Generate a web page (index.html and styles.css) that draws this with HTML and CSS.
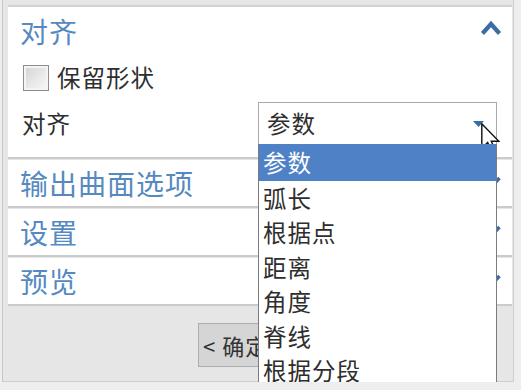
FILE: index.html
```html
<!DOCTYPE html>
<html lang="zh">
<head>
<meta charset="utf-8">
<link rel="stylesheet" href="styles.css">
</head>
<body>
<div class="frame">
  <div class="top-edge"></div>
  <section class="group open">
    <div class="group-head">
      <span class="title">对齐</span>
      <svg class="chev" width="22" height="16" viewBox="0 0 22 16"><path d="M2.5 13.5 L11 4 L19.5 13.5" fill="none" stroke="#3a6da6" stroke-width="4.2" stroke-linejoin="miter"/></svg>
    </div>
    <div class="check-row">
      <span class="checkbox"></span>
      <span class="label">保留形状</span>
    </div>
    <div class="field-row">
      <span class="label">对齐</span>
      <div class="combo">
        <span class="value">参数</span>
        <svg class="combo-arrow" width="11" height="6" viewBox="0 0 11 6"><path d="M0 0 H11 L5.5 6 Z" fill="#3a6da6"/></svg>
        <ul class="dropdown">
          <li class="selected">参数</li>
          <li>弧长</li>
          <li>根据点</li>
          <li>距离</li>
          <li>角度</li>
          <li>脊线</li>
          <li>根据分段</li>
        </ul>
        <svg class="cursor" width="19" height="30" viewBox="0 0 12 19"><path d="M0.5 0.5 L0.5 16 L4.2 12.4 L6.8 18.3 L9 17.3 L6.5 11.6 L11.3 11.6 Z" fill="#fff" stroke="#111" stroke-width="0.9" stroke-linejoin="miter"/></svg>
      </div>
    </div>
  </section>
  <section class="group">
    <div class="group-head">
      <span class="title">输出曲面选项</span>
      <svg class="chev" width="22" height="14" viewBox="0 0 22 14"><path d="M2.5 2 L11 11 L19.5 2" fill="none" stroke="#3a6da6" stroke-width="3.5"/></svg>
    </div>
  </section>
  <section class="group">
    <div class="group-head">
      <span class="title">设置</span>
      <svg class="chev" width="22" height="14" viewBox="0 0 22 14"><path d="M2.5 2 L11 11 L19.5 2" fill="none" stroke="#3a6da6" stroke-width="3.5"/></svg>
    </div>
  </section>
  <section class="group">
    <div class="group-head">
      <span class="title">预览</span>
      <svg class="chev" width="22" height="14" viewBox="0 0 22 14"><path d="M2.5 2 L11 11 L19.5 2" fill="none" stroke="#3a6da6" stroke-width="3.5"/></svg>
    </div>
  </section>
  <div class="footer">
    <button class="btn">&lt; 确定 &gt;</button>
    <button class="btn">应用</button>
  </div>
</div>
</body>
</html>
```
FILE: styles.css
```css
* { box-sizing: border-box; }
html, body {
  margin: 0;
  padding: 0;
  background: #eeeeee;
  font-family: "Noto Sans CJK SC", "Microsoft YaHei", sans-serif;
  overflow: hidden;
}
.frame {
  margin-left: 2px;
  width: 512px;
  height: 382px;
  background: #e6e6e6;
  border-left: 1px solid #c6c6c6;
  border-right: 1px solid #cfcfcf;
  border-bottom: 1px solid #cfcfcf;
  padding: 0 1px 0 5px;
  display: flex;
  flex-direction: column;
}
.top-edge {
  height: 7px;
  border-bottom: 2px solid #d2d2d2;
  flex: none;
}
.group {
  background: #ffffff;
  height: 48px;
  border-bottom: 2px solid #cbcbcb;
  margin-bottom: 1px;
  flex: none;
}
.group.open {
  height: 152px;
}
.group-head {
  height: 46px;
  display: flex;
  align-items: center;
  justify-content: space-between;
  padding: 0 10px 0 12px;
}
.title {
  font-size: 28px;
  letter-spacing: 1px;
  color: #5589c0;
  line-height: 1;
}
.group.open .group-head .title { margin-top: 2px; }
.group.open .chev { margin-top: -4px; }
.check-row {
  height: 49px;
  display: flex;
  align-items: center;
  padding-left: 15px;
  gap: 8px;
}
.checkbox {
  width: 26px;
  height: 26px;
  border: 1px solid #8e8e8e;
  background: linear-gradient(135deg, #d2d2d2 0%, #e9e9e9 55%, #f7f7f7 100%);
  box-shadow: inset 0 0 0 2px #f4f4f4;
  margin-top: 1px;
}
.label {
  font-size: 23.5px;
  letter-spacing: 1px;
  color: #2e2e2e;
  line-height: 1;
}
.field-row {
  height: 43px;
  display: flex;
  align-items: center;
  justify-content: space-between;
  padding: 0 15px 0 14px;
}
.combo {
  position: relative;
  width: 239px;
  height: 43px;
  border: 1px solid #a9a9a9;
  background: #fff;
  display: flex;
  align-items: center;
  padding-left: 8px;
}
.value {
  font-size: 23.5px;
  letter-spacing: 1px;
  color: #2e2e2e;
  line-height: 1;
}
.combo-arrow {
  position: absolute;
  right: 12px;
  top: 18px;
}
.cursor {
  position: absolute;
  left: 222px;
  top: 20px;
}
.dropdown {
  position: absolute;
  left: -1px;
  top: 41px;
  width: 239px;
  margin: 0;
  padding: 0;
  list-style: none;
  background: #fff;
  border: 1px solid #7c7c7c;
  border-top: none;
  z-index: 5;
}
.dropdown li {
  height: 34.5px;
  display: flex;
  align-items: center;
  padding-left: 4px;
  font-size: 23.5px;
  letter-spacing: 1px;
  color: #2e2e2e;
  line-height: 1;
}
.dropdown li.selected {
  background: #4f81c7;
  color: #ffffff;
  height: 37px;
}
.footer {
  flex: 1;
  display: flex;
  align-items: flex-start;
  padding: 16px 0 0 190px;
  gap: 12px;
}
.btn {
  height: 44px;
  width: 128px;
  border: 1px solid #adadad;
  background: #d5d5d5;
  font-family: "Noto Sans CJK SC", sans-serif;
  font-size: 22px;
  letter-spacing: 1px;
  color: #333;
  text-align: left;
  padding: 0 0 0 4px;
  line-height: 1;
}
```
